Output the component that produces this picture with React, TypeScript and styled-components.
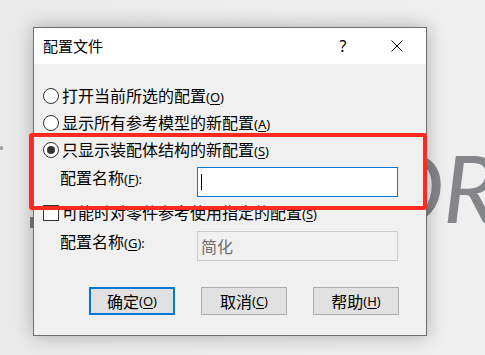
import React from 'react';
import styled, { createGlobalStyle } from 'styled-components';

const Global = createGlobalStyle`
  html, body { margin: 0; padding: 0; }
  body {
    background: #ededed;
    font-family: "Noto Sans CJK SC", "Noto Sans", sans-serif;
    color: #000;
  }
`;

const Desktop = styled.div`
  position: relative;
  width: 485px;
  height: 355px;
  overflow: hidden;
  background: linear-gradient(90deg, #eaeaea 0%, #eeeeee 60%, #efefef 100%);
`;

const BgText = styled.div`
  position: absolute;
  left: 374px;
  top: 140px;
  font-family: Lato, "Liberation Sans", sans-serif;
  font-weight: 400;
  font-style: italic;
  font-size: 94px;
  line-height: 1;
  color: #85868a;
  letter-spacing: -1px;
  white-space: nowrap;
`;

const BgDot = styled.div`
  position: absolute;
  left: 0;
  top: 146px;
  width: 3px;
  height: 4px;
  border-radius: 2px;
  background: #9a9a9a;
`;

const BgMark = styled.div`
  position: absolute;
  left: 30px;
  top: 217px;
  width: 4px;
  height: 11px;
  background: #7a7a7a;
`;

const Window = styled.div`
  position: absolute;
  left: 33px;
  top: 27px;
  width: 392px;
  height: 307px;
  border: 1px solid #6f6f6f;
  background: #f0f0f0;
  box-shadow: 0 0 18px rgba(0, 0, 0, 0.28);
  display: flex;
  flex-direction: column;
`;

const TitleBar = styled.div`
  height: 36px;
  background: #ffffff;
  display: flex;
  align-items: center;
  padding-left: 9px;
  padding-right: 23px;
`;

const Title = styled.div`
  flex: 1;
  font-size: 15px;
  line-height: 20px;
`;

const HelpGlyph = styled.div`
  width: 20px;
  text-align: center;
  font-family: "Noto Sans", sans-serif;
  font-size: 16px;
  line-height: 20px;
  margin-right: 38px;
`;

const CloseIcon = styled.svg`
  width: 12px;
  height: 12px;
  display: block;
`;

const Body = styled.div`
  flex: 1;
  display: flex;
  flex-direction: column;
  padding: 18px 0 0 9px;
`;

const OptionRow = styled.div<{ $mt?: number }>`
  height: 27px;
  display: flex;
  align-items: center;
  gap: 3px;
  margin-top: ${(p) => p.$mt ?? 0}px;
  font-size: 16px;
  line-height: 20px;
  white-space: nowrap;
`;

const Radio = styled.span<{ $checked?: boolean }>`
  width: 14px;
  height: 14px;
  border: 1px solid #333;
  border-radius: 50%;
  background: #fff;
  display: flex;
  align-items: center;
  justify-content: center;
  flex: none;
  &::after {
    content: '';
    width: 8px;
    height: 8px;
    border-radius: 50%;
    background: ${(p) => (p.$checked ? '#333' : 'transparent')};
  }
`;

const Check = styled.span`
  width: 14px;
  height: 14px;
  border: 1px solid #333;
  background: #fff;
  flex: none;
`;

const Mn = styled.span`
  font-family: "Noto Sans", "Liberation Sans", sans-serif;
  font-size: 13px;
  u { text-decoration: underline; text-underline-offset: 2px; }
`;

const FieldRow = styled.div<{ $mt: number }>`
  display: flex;
  align-items: flex-start;
  margin-top: ${(p) => p.$mt}px;
  height: 30px;
`;

const FieldLabel = styled.div`
  width: 137px;
  padding-left: 17px;
  font-size: 16px;
  line-height: 20px;
  white-space: nowrap;
`;

const TextBox = styled.div<{ $disabled?: boolean }>`
  box-sizing: border-box;
  width: 201px;
  height: 30px;
  border: 1px solid ${(p) => (p.$disabled ? '#cccccc' : '#0078d7')};
  background: ${(p) => (p.$disabled ? '#f0f0f0' : '#ffffff')};
  color: ${(p) => (p.$disabled ? '#6d6d6d' : '#000')};
  display: flex;
  align-items: center;
  padding-left: 3px;
  font-size: 16px;
  line-height: 20px;
`;

const Caret = styled.span`
  width: 1px;
  height: 16px;
  background: #000;
`;

const ButtonRow = styled.div`
  display: flex;
  gap: 26px;
  margin-top: 26px;
  padding-left: 46px;
`;

const Button = styled.div<{ $primary?: boolean }>`
  box-sizing: border-box;
  width: 86px;
  height: 28px;
  background: #e1e1e1;
  border: ${(p) => (p.$primary ? '2px solid #0078d7' : '1px solid #adadad')};
  display: flex;
  align-items: center;
  justify-content: center;
  font-size: 16px;
  line-height: 20px;
  white-space: nowrap;
`;

const Highlight = styled.div`
  position: absolute;
  left: 29px;
  top: 133px;
  width: 390px;
  height: 69px;
  border: 4px solid #fe2a20;
  border-radius: 3px;
  pointer-events: none;
`;

const M = ({ k }: { k: string }) => (
  <Mn>
    (<u>{k}</u>)
  </Mn>
);

export default function App() {
  return (
    <Desktop>
      <Global />
      <BgDot />
      <BgMark />
      <BgText>OR</BgText>
      <Window>
        <TitleBar>
          <Title>配置文件</Title>
          <HelpGlyph>?</HelpGlyph>
          <CloseIcon viewBox="0 0 12 12">
            <path d="M0.5 0.5 L11.5 11.5 M11.5 0.5 L0.5 11.5" stroke="#000" strokeWidth="1" fill="none" />
          </CloseIcon>
        </TitleBar>
        <Body>
          <OptionRow>
            <Radio />
            <span>
              打开当前所选的配置<M k="O" />
            </span>
          </OptionRow>
          <OptionRow>
            <Radio />
            <span>
              显示所有参考模型的新配置<M k="A" />
            </span>
          </OptionRow>
          <OptionRow>
            <Radio $checked />
            <span>
              只显示装配体结构的新配置<M k="S" />
            </span>
          </OptionRow>
          <FieldRow $mt={4}>
            <FieldLabel>
              配置名称<M k="F" />
              <Mn>:</Mn>
            </FieldLabel>
            <TextBox>
              <Caret />
            </TextBox>
          </FieldRow>
          <OptionRow $mt={2}>
            <Check />
            <span>
              可能时对零件参考使用指定的配置<M k="S" />
            </span>
          </OptionRow>
          <FieldRow $mt={5}>
            <FieldLabel>
              配置名称<M k="G" />
              <Mn>:</Mn>
            </FieldLabel>
            <TextBox $disabled>简化</TextBox>
          </FieldRow>
          <ButtonRow>
            <Button $primary>
              确定<M k="O" />
            </Button>
            <Button>
              取消<M k="C" />
            </Button>
            <Button>
              帮助<M k="H" />
            </Button>
          </ButtonRow>
        </Body>
      </Window>
      <Highlight />
    </Desktop>
  );
}
